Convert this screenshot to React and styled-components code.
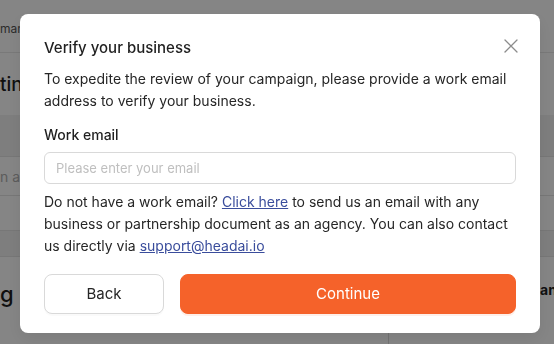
import React from "react";
import styled, { createGlobalStyle } from "styled-components";

const GlobalStyle = createGlobalStyle`
  html, body {
    margin: 0;
    padding: 0;
    background: #ffffff;
    font-family: Inter, "Noto Sans", sans-serif;
  }
  * { box-sizing: border-box; }
`;

const Page = styled.div`
  width: 554px;
  height: 344px;
  overflow: hidden;
  background: #ffffff;
  color: #1f1f1f;
`;

const TopBar = styled.div`
  height: 53px;
  display: flex;
  align-items: center;
  padding-top: 4px;
  border-bottom: 1px solid #e8e8e8;
  font-size: 12px;
  color: #555;
  white-space: nowrap;
`;

const SectionTitle = styled.div`
  height: 62px;
  display: flex;
  align-items: center;
  font-size: 19px;
  font-weight: 500;
  white-space: nowrap;
`;

const Band = styled.div`
  height: ${(p) => p.$h}px;
  background: #f2f2f2;
  border-bottom: 1px solid #e4e4e4;
`;

const Row = styled.div`
  height: ${(p) => p.$h}px;
  display: flex;
  align-items: center;
  border-bottom: 1px solid #e4e4e4;
  font-size: 14px;
  color: #b0b0b0;
  white-space: nowrap;
`;

const Columns = styled.div`
  display: grid;
  grid-template-columns: 389px 1fr;
  height: 90px;
`;

const LeftCol = styled.div`
  border-right: 1px solid #dcdcdc;
  padding-top: 24px;
  font-size: 22px;
  font-weight: 500;
  white-space: nowrap;
`;

const RightCol = styled.div`
  padding-top: 24px;
  padding-left: 151px;
  font-size: 14px;
  font-weight: 700;
  white-space: nowrap;
  overflow: hidden;
`;

const Overlay = styled.div`
  position: fixed;
  inset: 0;
  background: rgba(0, 0, 0, 0.48);
  display: flex;
  align-items: center;
  justify-content: flex-start;
  padding: 2px 0 0 20px;
`;

const Modal = styled.div`
  position: relative;
  width: 520px;
  background: #ffffff;
  border-radius: 8px;
  padding: 22px 24px 19px;
  box-shadow: 0 6px 16px rgba(0, 0, 0, 0.08);
  color: #262626;
`;

const Title = styled.h2`
  margin: 0;
  font-size: 15px;
  line-height: 24px;
  font-weight: 500;
  color: #1f1f1f;
`;

const CloseButton = styled.button`
  position: absolute;
  top: 20px;
  right: 17px;
  width: 24px;
  height: 24px;
  padding: 0;
  border: none;
  background: transparent;
  display: flex;
  align-items: center;
  justify-content: center;
  cursor: pointer;
`;

const Text = styled.p`
  margin: ${(p) => p.$mt || 0}px 0 0;
  font-size: 14px;
  line-height: 22px;
  color: #262626;
`;

const Label = styled.div`
  margin-top: 12px;
  font-size: 14px;
  line-height: 22px;
  font-weight: 500;
  color: #1f1f1f;
`;

const Input = styled.input`
  display: block;
  width: 100%;
  height: 32px;
  margin-top: 6px;
  padding: 0 11px;
  border: 1px solid #d9d9d9;
  border-radius: 6px;
  font-family: inherit;
  font-size: 13px;
  color: #262626;
  outline: none;

  &::placeholder {
    color: #bfbfbf;
  }
`;

const Link = styled.a`
  color: #3a4d9c;
  text-decoration: underline;
`;

const Actions = styled.div`
  display: grid;
  grid-template-columns: 120px 1fr;
  gap: 16px;
  margin-top: 17px;
`;

const Button = styled.button`
  height: 40px;
  border-radius: 8px;
  font-family: inherit;
  font-size: 15px;
  cursor: pointer;
  border: 1px solid ${(p) => (p.$primary ? "#f5622a" : "#d9d9d9")};
  background: ${(p) => (p.$primary ? "#f5622a" : "#ffffff")};
  color: ${(p) => (p.$primary ? "#ffffff" : "#262626")};
  box-shadow: 0 2px 0 ${(p) => (p.$primary ? "rgba(245, 98, 42, 0.1)" : "rgba(0, 0, 0, 0.02)")};
`;

const CloseIcon = () => (
  <svg width="14" height="14" viewBox="0 0 14 14" fill="none">
    <path d="M1 1L13 13M13 1L1 13" stroke="#8c8c8c" strokeWidth="1.3" strokeLinecap="round" />
  </svg>
);

export default function App() {
  return (
    <>
      <GlobalStyle />
      <Page>
        <TopBar>marketing</TopBar>
        <SectionTitle>ting details</SectionTitle>
        <Band $h={42} />
        <Row $h={39}>n audience</Row>
        <Row $h={35} />
        <Band $h={26} />
        <Columns>
          <LeftCol>g</LeftCol>
          <RightCol>an</RightCol>
        </Columns>
      </Page>
      <Overlay>
        <Modal>
          <Title>Verify your business</Title>
          <CloseButton aria-label="Close">
            <CloseIcon />
          </CloseButton>
          <Text $mt={8}>
            To expedite the review of your campaign, please provide a work email
            address to verify your business.
          </Text>
          <Label>Work email</Label>
          <Input placeholder="Please enter your email" />
          <Text $mt={7}>
            Do not have a work email? <Link href="#">Click here</Link> to send us an
            email with any business or partnership document as an agency. You can
            also contact us directly via <Link href="#">support@headai.io</Link>
          </Text>
          <Actions>
            <Button>Back</Button>
            <Button $primary>Continue</Button>
          </Actions>
        </Modal>
      </Overlay>
    </>
  );
}
